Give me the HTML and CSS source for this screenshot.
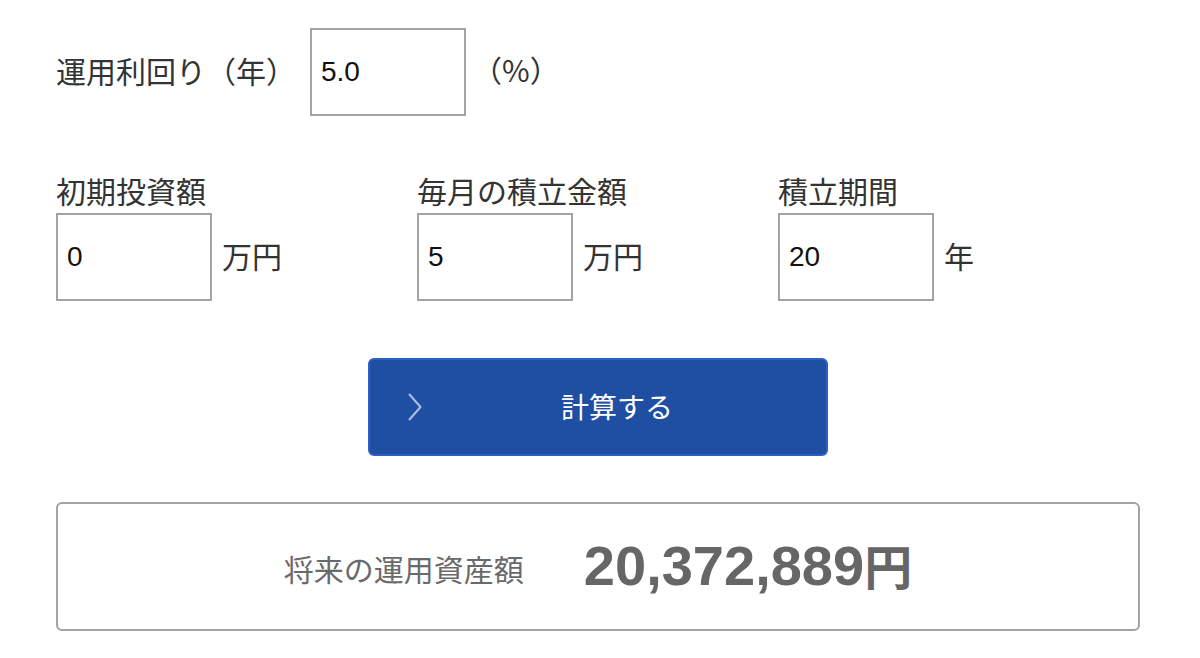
FILE: index.html
```html
<!DOCTYPE html>
<html lang="ja">
<head>
<meta charset="utf-8">
<title>積立シミュレーション</title>
<link rel="stylesheet" href="styles.css">
</head>
<body>
<main class="sim">
  <div class="rate-row">
    <label class="label" for="rate">運用利回り（年）</label>
    <input class="field" id="rate" type="text" value="5.0">
    <span class="unit">（%）</span>
  </div>

  <div class="inputs-row">
    <div class="group">
      <label class="label" for="init">初期投資額</label>
      <div class="field-line">
        <input class="field" id="init" type="text" value="0">
        <span class="unit">万円</span>
      </div>
    </div>
    <div class="group">
      <label class="label" for="monthly">毎月の積立金額</label>
      <div class="field-line">
        <input class="field" id="monthly" type="text" value="5">
        <span class="unit">万円</span>
      </div>
    </div>
    <div class="group">
      <label class="label" for="years">積立期間</label>
      <div class="field-line">
        <input class="field" id="years" type="text" value="20">
        <span class="unit">年</span>
      </div>
    </div>
  </div>

  <div class="btn-row">
    <button class="calc-btn" type="button">
      <svg class="chev" width="14" height="28" viewBox="0 0 14 28" aria-hidden="true">
        <path d="M1.5 1.5 L12.5 14 L1.5 26.5" fill="none" stroke="#aebde0" stroke-width="2" stroke-linecap="round" stroke-linejoin="round"/>
      </svg>
      <span class="btn-text">計算する</span>
    </button>
  </div>

  <div class="result">
    <span class="result-label">将来の運用資産額</span>
    <span class="result-value">20,372,889<span class="yen">円</span></span>
  </div>
</main>
</body>
</html>
```

FILE: styles.css
```css
html, body {
  margin: 0;
  padding: 0;
  background: #ffffff;
}

body {
  font-family: "Noto Sans CJK JP", "Noto Sans", sans-serif;
  color: #333333;
}

.sim {
  width: 1084px;
  padding: 28px 0 0 56px;
}

.label {
  font-size: 30px;
  line-height: 42px;
  color: #333333;
  display: block;
}

.field {
  box-sizing: border-box;
  width: 156px;
  height: 88px;
  margin: 0;
  border: 2px solid #a3a3a3;
  border-radius: 0;
  padding: 0 0 0 9px;
  font-family: "Liberation Sans", Arial, sans-serif;
  font-size: 28px;
  color: #111111;
  background: #ffffff;
  outline: none;
}

.unit {
  font-size: 30px;
  color: #333333;
  line-height: 42px;
}

.rate-row {
  display: flex;
  align-items: center;
}

.rate-row .label {
  margin-top: -4px;
  margin-right: 14px;
}

.rate-row .unit {
  margin-left: 6px;
  margin-top: -6px;
}

.inputs-row {
  display: flex;
  margin-top: 53px;
}

.group {
  width: 361px;
}

.group .label {
  margin-bottom: 2px;
}

.field-line {
  display: flex;
  align-items: center;
  gap: 10px;
}

.field-line .unit {
  margin-top: -4px;
}

.btn-row {
  display: flex;
  justify-content: center;
  margin-top: 57px;
}

.calc-btn {
  box-sizing: border-box;
  width: 460px;
  height: 98px;
  margin: 0;
  padding: 0 0 0 38px;
  border: 2px solid #2d60c6;
  border-radius: 6px;
  background: #1f4fa3;
  color: #ffffff;
  display: flex;
  align-items: center;
  justify-content: center;
  position: relative;
  cursor: pointer;
  font-family: "Noto Sans CJK JP", sans-serif;
}

.chev {
  position: absolute;
  left: 38px;
  top: 33px;
}

.btn-text {
  font-size: 28px;
  line-height: 40px;
  color: #ffffff;
  margin-top: -2px;
}

.result {
  box-sizing: border-box;
  margin-top: 46px;
  height: 129px;
  border: 2px solid #a3a3a3;
  border-radius: 6px;
  display: flex;
  align-items: center;
  justify-content: center;
  gap: 60px;
}

.result-label {
  font-size: 30px;
  color: #6a6a6a;
  line-height: 44px;
  margin-top: 2px;
}

.result-value {
  font-family: "Liberation Sans", Arial, "Noto Sans CJK JP", sans-serif;
  font-weight: 700;
  font-size: 56px;
  line-height: 64px;
  color: #666666;
  margin-top: -4px;
}

.yen {
  font-family: "Noto Sans CJK JP", sans-serif;
  font-weight: 700;
  font-size: 48px;
}
```
